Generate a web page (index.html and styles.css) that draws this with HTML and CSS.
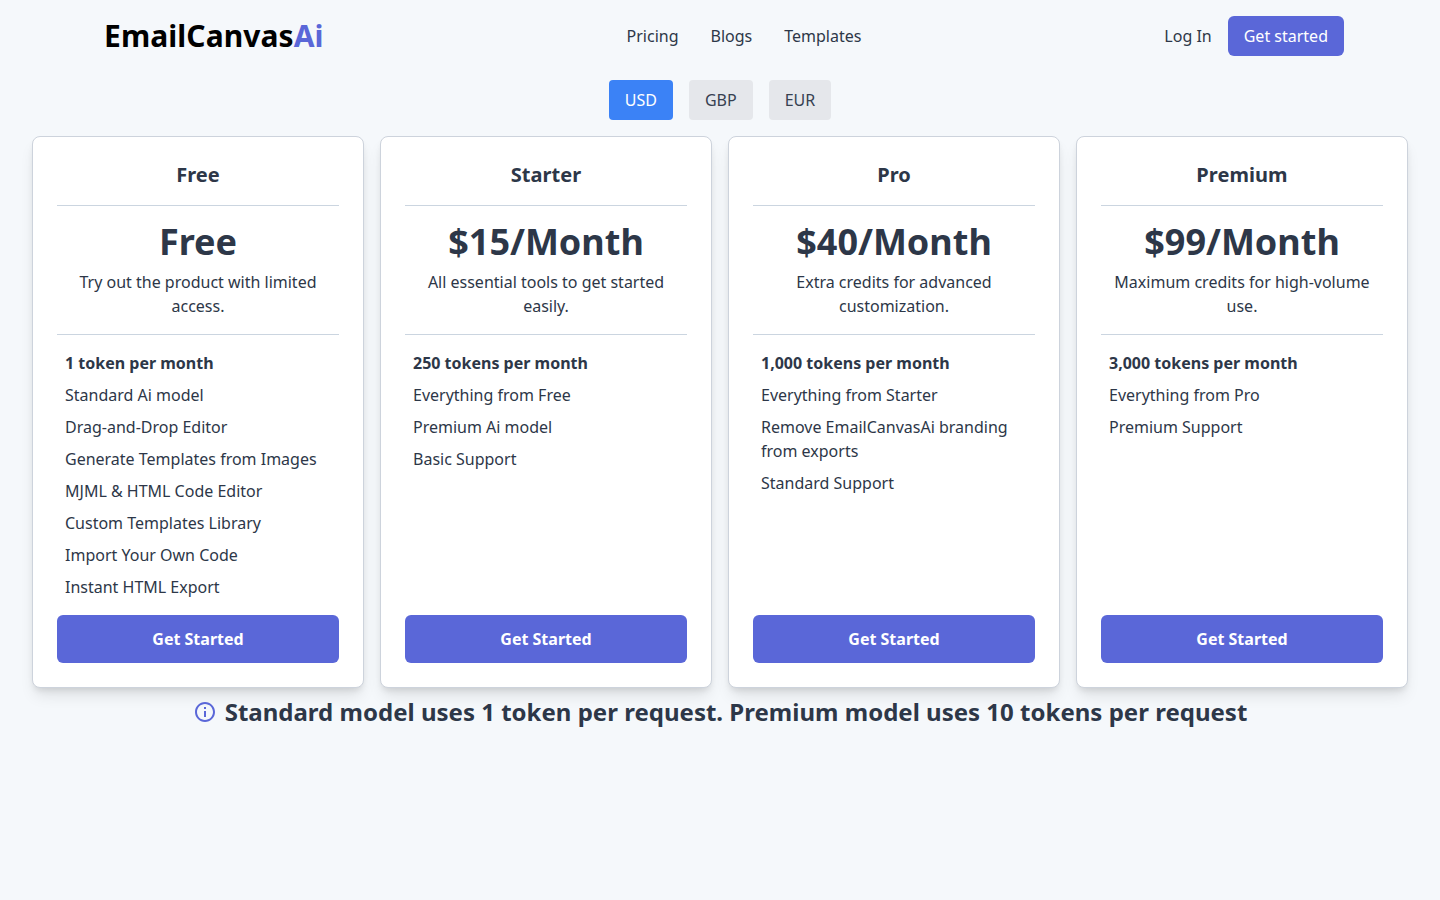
FILE: index.html
```html
<!DOCTYPE html>
<html lang="en">
<head>
<meta charset="utf-8">
<title>EmailCanvasAi Pricing</title>
<link rel="stylesheet" href="styles.css">
</head>
<body>
<header class="header">
  <a class="logo"><span>EmailCanvas</span><span class="accent">Ai</span></a>
  <nav class="nav"><a>Pricing</a><a>Blogs</a><a>Templates</a></nav>
  <div class="account"><a>Log In</a><a class="signup">Get started</a></div>
</header>
<main>
  <div class="currencies">
    <button class="currency active">USD</button>
    <button class="currency">GBP</button>
    <button class="currency">EUR</button>
  </div>
  <section class="plans">
    <article class="plan">
      <h2 class="name">Free</h2>
      <div class="offer"><p class="price">Free</p><p>Try out the product with limited access.</p></div>
      <ul class="features">
        <li class="tokens">1 token per month</li>
        <li>Standard Ai model</li>
        <li>Drag-and-Drop Editor</li>
        <li>Generate Templates from Images</li>
        <li>MJML &amp; HTML Code Editor</li>
        <li>Custom Templates Library</li>
        <li>Import Your Own Code</li>
        <li>Instant HTML Export</li>
      </ul>
      <button class="start">Get Started</button>
    </article>
    <article class="plan">
      <h2 class="name">Starter</h2>
      <div class="offer"><p class="price">$15/Month</p><p>All essential tools to get started easily.</p></div>
      <ul class="features">
        <li class="tokens">250 tokens per month</li>
        <li>Everything from Free</li>
        <li>Premium Ai model</li>
        <li>Basic Support</li>
      </ul>
      <button class="start">Get Started</button>
    </article>
    <article class="plan">
      <h2 class="name">Pro</h2>
      <div class="offer"><p class="price">$40/Month</p><p>Extra credits for advanced customization.</p></div>
      <ul class="features">
        <li class="tokens">1,000 tokens per month</li>
        <li>Everything from Starter</li>
        <li>Remove EmailCanvasAi branding from exports</li>
        <li>Standard Support</li>
      </ul>
      <button class="start">Get Started</button>
    </article>
    <article class="plan">
      <h2 class="name">Premium</h2>
      <div class="offer"><p class="price">$99/Month</p><p>Maximum credits for high-volume use.</p></div>
      <ul class="features">
        <li class="tokens">3,000 tokens per month</li>
        <li>Everything from Pro</li>
        <li>Premium Support</li>
      </ul>
      <button class="start">Get Started</button>
    </article>
  </section>
  <div class="note">
    <svg class="info" viewBox="0 0 24 24" fill="currentColor"><path d="M11 7h2v2h-2zm0 4h2v6h-2zm1-9C6.480 2 2 6.480 2 12s4.480 10 10 10 10-4.480 10-10S17.520 2 12 2m0 18c-4.410 0-8-3.590-8-8s3.590-8 8-8 8 3.590 8 8-3.590 8-8 8"/></svg>
    <p>Standard model uses 1 token per request. Premium model uses 10 tokens per request</p>
  </div>
</main>
</body>
</html>
```
FILE: styles.css
```css
* { box-sizing: border-box; margin: 0; padding: 0; }
body {
  min-height: 100vh;
  background: #f5f8fb;
  color: #2d3748;
  font: 16px/24px "Noto Sans", sans-serif;
}
button { border: 0; font: inherit; color: inherit; }
.header {
  display: flex;
  justify-content: space-between;
  align-items: center;
  height: 72px;
  padding: 0 96px 0 104px;
}
.logo { display: flex; font-size: 30px; line-height: 36px; font-weight: 700; letter-spacing: 0.08px; color: #000; }
.accent { color: #5a67d8; }
.nav { display: flex; gap: 32px; }
.account { display: flex; align-items: center; gap: 16px; }
.signup { padding: 8px 16px; border-radius: 6px; background: #5a67d8; color: #fff; }
.currencies { display: flex; justify-content: center; gap: 16px; padding: 8px 0 16px; }
.currency { height: 40px; padding: 0 16px; border-radius: 4px; background: #e5e7eb; color: #374151; }
.currency.active { background: #3b82f6; color: #fff; }
.plans { display: grid; grid-template-columns: repeat(4, 1fr); gap: 16px; padding: 0 32px; }
.plan {
  display: flex;
  flex-direction: column;
  min-height: 552px;
  padding: 24px;
  border: 1px solid #cdd3dc;
  border-radius: 8px;
  background: #fff;
  box-shadow: 0 10px 15px -3px rgba(0,0,0,.1), 0 4px 6px -2px rgba(0,0,0,.1);
}
.name { height: 45px; font-size: 20px; line-height: 28px; font-weight: 700; letter-spacing: 0.06px; text-align: center; border-bottom: 1px solid #cbd5e0; }
.offer { padding: 16px 8px; border-bottom: 1px solid #cbd5e0; text-align: center; }
.price { font-size: 36px; line-height: 40px; font-weight: 700; white-space: nowrap; }
.offer p + p { margin-top: 8px; }
.features { flex: 1; display: flex; flex-direction: column; gap: 8px; padding: 16px 8px; list-style: none; }
.tokens { font-weight: 700; }
.start { height: 48px; border-radius: 6px; background: #5a67d8; color: #fff; font-weight: 700; }
.note { display: flex; justify-content: center; align-items: center; gap: 8px; margin-top: 8px; font-size: 24px; line-height: 32px; font-weight: 700; letter-spacing: 0.008px; }
.info { width: 24px; height: 24px; color: #5a67d8; }
```
